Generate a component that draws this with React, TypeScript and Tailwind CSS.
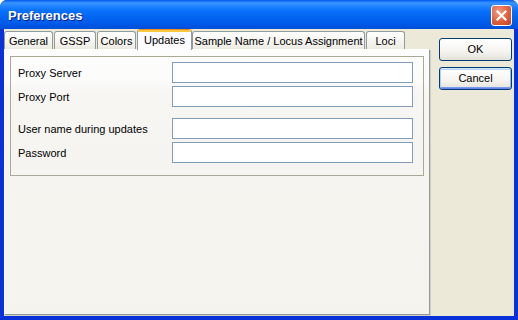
const font = { fontFamily: '"Liberation Sans", Arial, sans-serif' };

const tabs = [
  { label: 'General', w: 'w-[49px]', gap: 'ml-0' },
  { label: 'GSSP', w: 'w-[42px]', gap: 'ml-[1px]' },
  { label: 'Colors', w: 'w-[39px]', gap: 'ml-[1px]' },
  { label: 'Updates', w: 'w-[55px]', gap: 'ml-[1px]', active: true },
  { label: 'Sample Name / Locus Assignment', w: 'w-[173px]', gap: 'ml-0' },
  { label: 'Loci', w: 'w-[39px]', gap: 'ml-[1px]' },
];

const fields = [
  { label: 'Proxy Server', gap: 'mt-0' },
  { label: 'Proxy Port', gap: 'mt-[3px]' },
  { label: 'User name during updates', gap: 'mt-[11px]' },
  { label: 'Password', gap: 'mt-[3px]' },
];

function Tab({ label, w, gap, active }: { label: string; w: string; gap: string; active?: boolean }) {
  if (active) {
    return (
      <div
        className={`${w} ${gap} shrink-0 relative z-10 h-[21px] -mb-px flex flex-col rounded-t-[3px] border-x border-[#919b9c] bg-[#fcfcfe] overflow-hidden`}
      >
        <div className="h-[1px] bg-[#e68b2c]" />
        <div className="h-[2px] bg-[#ffc73c]" />
        <div className="flex-1 flex items-center justify-center pb-[2px] text-[11px] whitespace-nowrap text-black">{label}</div>
      </div>
    );
  }
  return (
    <div
      className={`${w} ${gap} shrink-0 h-[18px] flex items-center justify-center pt-[1px] rounded-t-[3px] border-x border-t border-[#919b9c] bg-[linear-gradient(to_bottom,#ffffff,#f3f2ec_70%,#ecebe4)] text-[11px] whitespace-nowrap overflow-hidden text-black`}
    >
      {label}
    </div>
  );
}

function XpButton({ label, focused }: { label: string; focused?: boolean }) {
  return (
    <div
      className={`w-[73px] h-[23px] flex items-center justify-center rounded-[3px] border border-[#003c74] bg-[linear-gradient(to_bottom,#ffffff,#f5f4f0_60%,#e3e1d8)] text-[11px] text-black ${
        focused ? 'shadow-[inset_0_1px_0_#cee7ff,inset_1px_0_0_#b0cdf6,inset_-1px_0_0_#8cb4f2,inset_0_-1px_0_#6982ee,inset_0_2px_0_#bcd4f6,inset_0_-2px_0_#7a9af0]' : ''
      }`}
    >
      {label}
    </div>
  );
}

export default function App() {
  return (
    <div className="w-[518px] h-[320px] flex flex-col rounded-t-[7px] overflow-hidden bg-[#0831d9]" style={font}>
      {/* title bar */}
      <div className="h-[29px] shrink-0 flex items-center justify-between pl-[8px] pr-[6px] bg-[linear-gradient(to_bottom,#0058ee_0%,#3d95ff_10%,#2a8cff_16%,#0a72fc_36%,#0264f0_60%,#005ae8_82%,#004fd8_100%)]">
        <span className="pt-[3px] text-[13px] font-bold text-white [text-shadow:1px_1px_0_#0a1e8c]">Preferences</span>
        <div className="w-[21px] h-[21px] mt-[2px] rounded-[3px] border border-white bg-[radial-gradient(circle_at_35%_30%,#f19a7e,#e0603d_55%,#c2401f)] flex items-center justify-center">
          <svg width="11" height="11" viewBox="0 0 11 11">
            <path d="M1.5 1.5 L9.5 9.5 M9.5 1.5 L1.5 9.5" stroke="white" strokeWidth="2.2" strokeLinecap="square" />
          </svg>
        </div>
      </div>

      {/* body */}
      <div className="flex-1 flex mx-[4px] mb-[4px] bg-[#ece9d8]">
        <div className="w-[426px] flex flex-col">
          <div className="h-[20px] flex items-end">
            {tabs.map((t) => (
              <Tab key={t.label} {...t} />
            ))}
          </div>
          <div className="flex-1 mb-[1px] border-l border-t border-white border-r border-b border-r-[#919b9c] border-b-[#919b9c] shadow-[1px_1px_0_#d0cec4] bg-[linear-gradient(to_bottom,#fdfdfd_0%,#fbfbfa_12%,#f7f6f3_16%,#f5f4f0_45%,#f4f3ee_100%)] pt-[6px] pl-[5px] pr-[5px]">
            <div className="border border-[#aca899] pt-[5px] pb-[12px] pl-[7px] pr-[10px]">
              {fields.map((f) => (
                <div key={f.label} className={`${f.gap} flex items-center justify-between`}>
                  <span className="pt-[1px] text-[11px] whitespace-nowrap text-black">{f.label}</span>
                  <div className="w-[241px] h-[21px] border border-[#7f9db9] bg-white" />
                </div>
              ))}
            </div>
          </div>
        </div>
        <div className="flex-1 flex flex-col items-end pr-[2px] pt-[9px] gap-[6px]">
          <XpButton label="OK" />
          <XpButton label="Cancel" focused />
        </div>
      </div>
    </div>
  );
}
